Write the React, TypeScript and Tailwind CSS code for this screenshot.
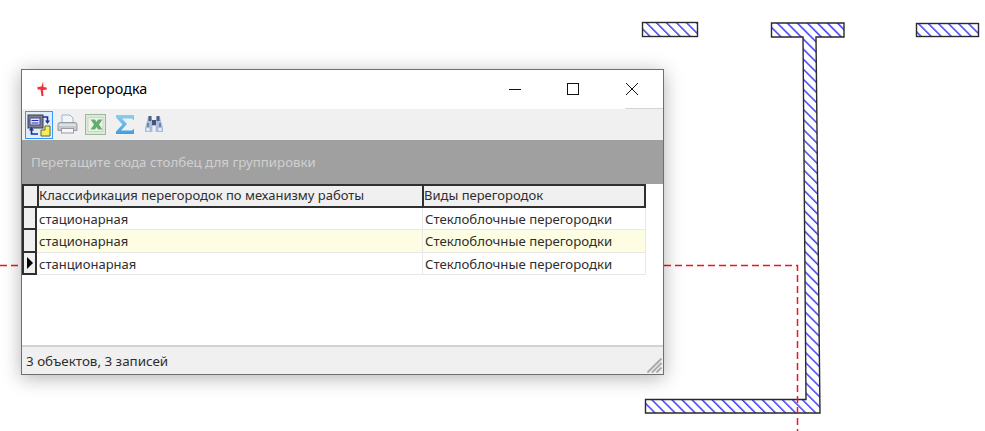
import React from "react";

const rows = [
  { a: "стационарная", bg: "bg-white", active: false, h: "h-[22px]" },
  { a: "стационарная", bg: "bg-[#fdfde3]", active: false, h: "h-[23px]" },
  { a: "станционарная", bg: "bg-white", active: true, h: "h-[22px]" },
];

function Drawing() {
  return (
    <svg className="absolute left-0 top-0" width={985} height={431}>
      <defs>
        <pattern id="hatch" patternUnits="userSpaceOnUse" width={7.1} height={7.1} patternTransform="rotate(-45 0 0)">
          <rect width={7.1} height={7.1} fill="#fff" />
          <rect x={0} y={0} width={1.5} height={7.1} fill="#4040f5" />
        </pattern>
      </defs>
      <g fill="url(#hatch)" stroke="#2a2a2a" strokeWidth={1.4}>
        <rect x={642.5} y={22.5} width={55} height={14} />
        <rect x={916.5} y={23.5} width={62} height={13} />
        <polygon points="771.5,23 844,23 844,37 816,37 820,413 645.5,413 645.5,399.5 806,399.5 803,37 771.5,37" />
      </g>
      <path d="M0 265.500H22" stroke="#f8101c" strokeWidth={1.5} strokeDasharray="7 4" fill="none" />
      <path d="M664 265.500H797.500V431" stroke="#f8101c" strokeWidth={1.5} strokeDasharray="7 4" fill="none" />
    </svg>
  );
}

function AppIcon() {
  return (
    <svg width={14} height={16} viewBox="0 0 14 16">
      <path d="M8 0.500 L6.500 5.500 L2.500 6 L2.500 8.500 L5.500 8.500 L6.500 15 L8.500 15 L8 9 L12 8.500 L11.500 6.500 L8.500 6 Z" fill="#f2303c" />
    </svg>
  );
}

function ColumnsIcon() {
  return (
    <svg width={24} height={24} viewBox="0 0 24 24">
      <rect x={1} y={2} width={15} height={13} fill="#7c8090" stroke="#3a3d4a" />
      <rect x={3} y={5} width={10} height={7} fill="#e4e8f5" stroke="#44489a" />
      <path d="M4.500 7.500H11.500M4.500 10H11.500" stroke="#2a2fb0" />
      <path d="M14 23V17H18V13H23V23Z" fill="#f5ee58" stroke="#666326" />
      <path d="M16 4H20.500V8" stroke="#1c2f9c" strokeWidth={1.6} fill="none" />
      <path d="M18 7.500L20.500 11L23 7.500Z" fill="#1c2f9c" />
      <path d="M11 21H4.500V17" stroke="#1c2f9c" strokeWidth={1.6} fill="none" />
      <path d="M2 17.500L4.500 14L7 17.500Z" fill="#1c2f9c" />
    </svg>
  );
}

function PrinterIcon() {
  return (
    <svg width={21} height={20} viewBox="0 0 21 20">
      <path d="M5 1h8l3 3v6H5z" fill="#f1f6fd" stroke="#9db1d0" />
      <path d="M3 8.500h15a2 2 0 0 1 2 2v6H1v-6a2 2 0 0 1 2-2z" fill="#c4c7cc" stroke="#9a9da2" />
      <rect x={4.500} y={14.500} width={12} height={4.500} fill="#f6f6f6" stroke="#9a9da2" />
      <rect x={2} y={10} width={17} height={2} fill="#dfe1e4" />
    </svg>
  );
}

function ExcelIcon() {
  return (
    <svg width={21} height={21} viewBox="0 0 21 21">
      <rect x={0.5} y={0.5} width={20} height={20} fill="#dfe9da" stroke="#9bb996" />
      <rect x={3} y={3.500} width={15} height={14} fill="#eef3ea" stroke="#c8d7c2" />
      <path d="M5.500 5.500H10L11.500 8L13 5.500H17.500L14 10.500L17.500 15.500H13L11.500 13L10 15.500H5.500L9 10.500Z" fill="#62ae6e" />
    </svg>
  );
}

function SigmaIcon() {
  return (
    <svg width={20} height={21} viewBox="0 0 20 21">
      <defs>
        <linearGradient id="sg" x1="0" y1="0" x2="0" y2="1">
          <stop offset="0" stopColor="#8ccdf2" />
          <stop offset="1" stopColor="#3f9fe0" />
        </linearGradient>
      </defs>
      <path d="M1 1H19V6.500L17 4.500H7L12 10L6 16.500H17L19 14.500V20H1V17.500L7.500 10.500L1 3.500Z" fill="url(#sg)" />
    </svg>
  );
}

function BinocularsIcon() {
  return (
    <svg width={20} height={18} viewBox="0 0 20 18">
      <path d="M4 2h3.500v4h5V2H16l1 4 2 7v4h-7.500v-6h-3v6H1v-4l2-7z" fill="#a9bcdb" />
      <path d="M8 5h4v5H8z" fill="#44557a" />
      <path d="M4.500 1h3v5h-3zM12.500 1h3v5h-3z" fill="#4a5e88" />
      <path d="M2.500 13h3v3h-3zM14.500 13h3v3h-3z" fill="#e4ecf8" />
      <path d="M3 8h2v4H3zM15 8h2v4h-2z" fill="#6f86ad" />
    </svg>
  );
}

function Grip() {
  return (
    <svg width={15} height={15} viewBox="0 0 15 15" className="absolute right-[1px] bottom-[1px]">
      <path d="M0.500 14.500L14.500 0.500M5 14.500L14.500 5M9.500 14.500L14.500 9.500" stroke="#ababab" strokeWidth={2} />
    </svg>
  );
}

export default function App() {
  return (
    <div className="relative w-[985px] h-[431px] overflow-hidden bg-white">
      <Drawing />
      <div className="absolute left-[21px] top-[69px] w-[643px] h-[306px] flex flex-col bg-white border border-[#6f6f6f] shadow-[0_3px_18px_rgba(0,0,0,0.3)] text-[13px] text-[#2e2e2e] font-['Noto_Sans','Open_Sans',sans-serif]">
        {/* Title bar */}
        <div className="h-[39px] flex items-center shrink-0 bg-white">
          <div className="ml-[13px] w-[14px] flex justify-center mb-[2px]"><AppIcon /></div>
          <span className="ml-[9px] mb-[2px] text-[14.4px] text-black">перегородка</span>
          <div className="ml-auto flex items-center h-full">
            <svg width={14} height={14} className="mr-[44px] mb-[2px]"><path d="M1 7.500H13" stroke="#111" /></svg>
            <svg width={14} height={14} className="mr-[45px] mb-[2px]"><rect x={1.5} y={1.5} width={11} height={11} fill="none" stroke="#111" /></svg>
            <div className="w-[38px] h-full flex items-center border-b border-[#d4d4d4]">
              <svg width={14} height={14}><path d="M1 1L13 13M13 1L1 13" stroke="#111" /></svg>
            </div>
          </div>
        </div>
        {/* Toolbar */}
        <div className="h-[31px] shrink-0 bg-[#f0f0f0] flex items-center pl-[3px] pt-[2px] pb-[1px]">
          <div className="w-[28px] h-[28px] flex items-center justify-center border border-[#3399ff] bg-[#e0eefa]"><ColumnsIcon /></div>
          <div className="ml-[4px] mb-[2px] w-[21px] flex justify-center"><PrinterIcon /></div>
          <div className="ml-[7px] mb-[1px]"><ExcelIcon /></div>
          <div className="ml-[9px] mb-[1px]"><SigmaIcon /></div>
          <div className="ml-[9px] mb-[2px]"><BinocularsIcon /></div>
        </div>
        {/* Group panel */}
        <div className="h-[44px] shrink-0 bg-[#a0a0a0] flex items-center pl-[9px] pt-[2px] text-[13.3px] text-[#d0d0d0]">
          Перетащите сюда столбец для группировки
        </div>
        {/* Grid */}
        <div className="flex-1 min-h-0 bg-white flex flex-col w-[624px]">
          <div className="flex h-[24px] shrink-0 bg-[#f0f0f0] border-2 border-[#2f2f2f]">
            <div className="w-[13px] border-r-2 border-[#2f2f2f] box-content" />
            <div className="w-[385px] border-r-2 border-[#2f2f2f] flex items-center">Классификация перегородок по механизму работы</div>
            <div className="flex-1 flex items-center">Виды перегородок</div>
          </div>
          {rows.map((r, i) => (
            <div key={i} className={`flex ${r.h} shrink-0 ${r.bg}`}>
              <div className="w-[15px] shrink-0 bg-[#f0f0f0] border-x-2 border-b-2 border-[#2f2f2f] flex items-center justify-center">
                {r.active && <svg width={8} height={12}><path d="M1 0L7 6L1 12Z" fill="#000" /></svg>}
              </div>
              <div className="w-[386px] shrink-0 pl-[2px] pt-[2px] border-r border-b border-[#e8e8e8] flex items-center">{r.a}</div>
              <div className="flex-1 pl-[2px] pt-[2px] border-r border-b border-[#e8e8e8] flex items-center text-[13.2px]">Стеклоблочные перегородки</div>
            </div>
          ))}
        </div>
        {/* Status bar */}
        <div className="relative h-[29px] shrink-0 bg-[#f0f0f0] border-t-2 border-[#d2d2d2] flex items-center pl-[4px] pt-[1px] text-[13.4px]">
          3 объектов, 3 записей
          <Grip />
        </div>
      </div>
    </div>
  );
}
